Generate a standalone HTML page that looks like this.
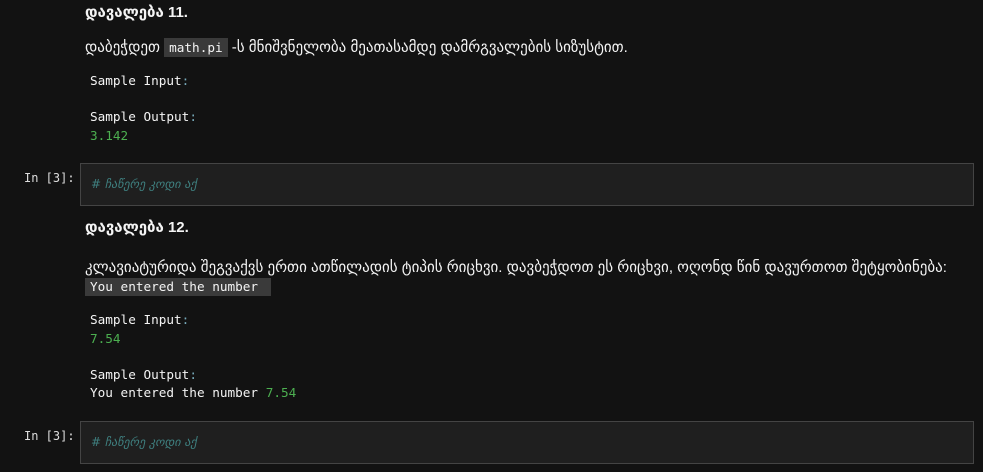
<!DOCTYPE html>
<html><head><meta charset="utf-8"><style>
body{margin:0;width:983px;height:472px;background:#121212;overflow:hidden;position:relative;font-family:"Liberation Sans","DejaVu Sans",sans-serif;color:#f4f4f4;font-size:15px}
.a{position:absolute;white-space:nowrap}
.m{font-family:"DejaVu Sans Mono","Liberation Mono",monospace;font-size:12.7px}
.g{color:#4caf50}
.b{font-weight:bold}
.c{position:absolute;left:80px;width:892px;height:41px;background:#1f1f1f;border:1px solid #444}
.cm{position:absolute;left:10px;top:13px;color:#3f8080;font-style:italic;font-size:12px;font-family:"DejaVu Sans",sans-serif}
.in{position:absolute;left:24px;color:#ddd;font-size:12px}
code{font-family:"DejaVu Sans Mono","Liberation Mono",monospace;font-size:12.7px;background:#3a3a3a;padding:2px 5px}
</style></head><body>
<div class="a b" style="left:85px;top:3px">დავალება 11.</div>
<div class="a" style="left:85px;top:38px">დაბეჭდეთ <code>math.pi</code> -ს მნიშვნელობა მეათასამდე დამრგვალების სიზუსტით.</div>
<div class="a m" style="left:90px;top:73px">Sample Input<span style="color:#7ab">:</span></div>
<div class="a m" style="left:90px;top:109px">Sample Output<span style="color:#7ab">:</span></div>
<div class="a m g" style="left:90px;top:128px">3.142</div>
<div class="in m" style="top:171px">In [3]:</div>
<div class="c" style="top:163px"><div class="cm"># ჩაწერე კოდი აქ</div></div>
<div class="a b" style="left:85px;top:218px">დავალება 12.</div>
<div class="a" style="left:85px;top:258px">კლავიატურიდა შეგვაქვს ერთი ათწილადის ტიპის რიცხვი. დავბეჭდოთ ეს რიცხვი, ოღონდ წინ დავურთოთ შეტყობინება:</div>
<div class="a m" style="left:85px;top:278px;width:181px;height:18px;background:#3a3a3a;padding-left:5px;line-height:18px">You entered the number</div>
<div class="a m" style="left:90px;top:312px">Sample Input<span style="color:#7ab">:</span></div>
<div class="a m g" style="left:90px;top:331px">7.54</div>
<div class="a m" style="left:90px;top:367px">Sample Output<span style="color:#7ab">:</span></div>
<div class="a m" style="left:90px;top:385px">You entered the number <span class="g">7.54</span></div>
<div class="in m" style="top:429px">In [3]:</div>
<div class="c" style="top:421px"><div class="cm"># ჩაწერე კოდი აქ</div></div>
</body></html>
